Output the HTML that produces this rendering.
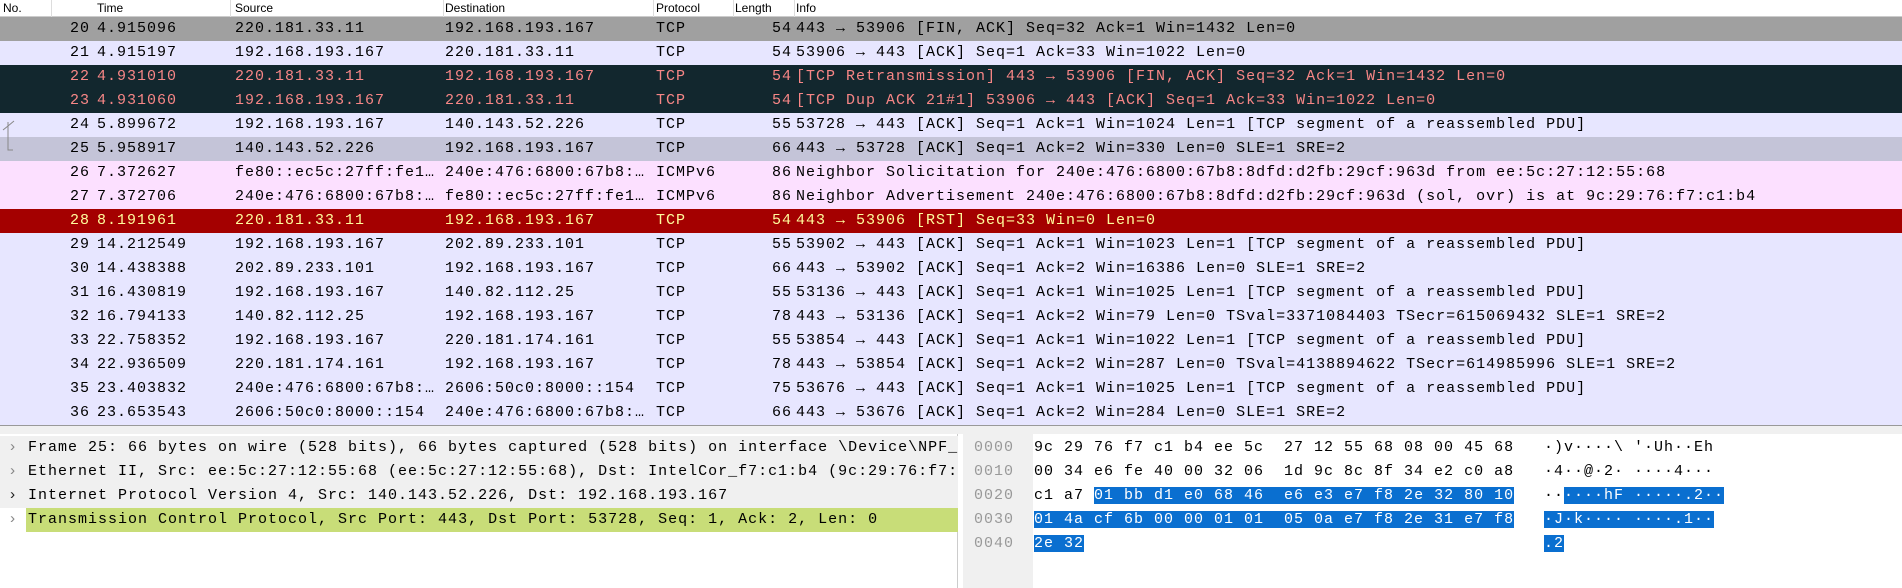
<!DOCTYPE html>
<html><head><meta charset="utf-8"><style>
*{margin:0;padding:0;box-sizing:border-box}
body{width:1902px;height:588px;overflow:hidden;background:#fff;font-family:"Liberation Mono",monospace;font-size:15px;letter-spacing:1px;color:#000;position:relative}
.hd{position:absolute;top:0;left:0;width:1902px;height:17px;background:#fff;border-bottom:1px solid #ccc;font-family:"Liberation Sans",sans-serif;font-size:12px;letter-spacing:0}
.hd span{position:absolute;top:1px}
.hd i{position:absolute;top:0;height:17px;border-left:1px solid #ddd}
.r{position:absolute;left:0;width:1902px;height:24px;line-height:24px;white-space:pre}
.r span{position:absolute;top:0}
.n{right:1812px;text-align:right}
.t{left:97px}.s{left:235px}.d{left:445px}.p{left:656px}
.l{right:1110px;text-align:right}.i{left:796px}
.lav{background:#e7e6ff}.gry{background:#a0a0a0}.drk{background:#12272e;color:#f78686}.sel{background:#c4c4d8}.pnk{background:#fce0ff}.red{background:#a40000;color:#fffc9c}
.sep{position:absolute;left:0;top:425px;width:1902px;height:9px;background:#f0f0f0;border-top:1px solid #999}
.lp{position:absolute;left:0;top:434px;width:958px;height:154px;background:#fff;border-right:1px solid #ccc}
.dl{position:absolute;left:0;width:958px;height:24px;line-height:24px;white-space:pre;background:#f0f0f0}
.dl b{position:absolute;left:8px;font-weight:normal;color:#888}
.dl span{position:absolute;left:28px}
.rp{position:absolute;left:963px;top:434px;width:939px;height:154px;background:#fff;border-left:1px solid #999}
.off{position:absolute;left:963px;top:434px;width:70px;height:154px;background:#f0f0f0}
.hx{position:absolute;height:24px;line-height:24px;white-space:pre}
.o{left:974px;color:#999}
.bl{background:#0a6fd0;color:#fff}
</style></head><body>
<div class="hd"><span style="left:3px">No.</span><i style="left:51px"></i><span style="left:97px">Time</span><i style="left:230px"></i><span style="left:235px">Source</span><i style="left:443px"></i><span style="left:445px">Destination</span><i style="left:653px"></i><span style="left:656px">Protocol</span><i style="left:733px"></i><span style="left:735px">Length</span><i style="left:794px"></i><span style="left:796px">Info</span></div>

<div class="r gry" style="top:17px"><span class="n">20</span><span class="t">4.915096</span><span class="s">220.181.33.11</span><span class="d">192.168.193.167</span><span class="p">TCP</span><span class="l">54</span><span class="i">443 → 53906 [FIN, ACK] Seq=32 Ack=1 Win=1432 Len=0</span></div>
<div class="r lav" style="top:41px"><span class="n">21</span><span class="t">4.915197</span><span class="s">192.168.193.167</span><span class="d">220.181.33.11</span><span class="p">TCP</span><span class="l">54</span><span class="i">53906 → 443 [ACK] Seq=1 Ack=33 Win=1022 Len=0</span></div>
<div class="r drk" style="top:65px"><span class="n">22</span><span class="t">4.931010</span><span class="s">220.181.33.11</span><span class="d">192.168.193.167</span><span class="p">TCP</span><span class="l">54</span><span class="i">[TCP Retransmission] 443 → 53906 [FIN, ACK] Seq=32 Ack=1 Win=1432 Len=0</span></div>
<div class="r drk" style="top:89px"><span class="n">23</span><span class="t">4.931060</span><span class="s">192.168.193.167</span><span class="d">220.181.33.11</span><span class="p">TCP</span><span class="l">54</span><span class="i">[TCP Dup ACK 21#1] 53906 → 443 [ACK] Seq=1 Ack=33 Win=1022 Len=0</span></div>
<div class="r lav" style="top:113px"><span class="n">24</span><span class="t">5.899672</span><span class="s">192.168.193.167</span><span class="d">140.143.52.226</span><span class="p">TCP</span><span class="l">55</span><span class="i">53728 → 443 [ACK] Seq=1 Ack=1 Win=1024 Len=1 [TCP segment of a reassembled PDU]</span></div>
<div class="r sel" style="top:137px"><span class="n">25</span><span class="t">5.958917</span><span class="s">140.143.52.226</span><span class="d">192.168.193.167</span><span class="p">TCP</span><span class="l">66</span><span class="i">443 → 53728 [ACK] Seq=1 Ack=2 Win=330 Len=0 SLE=1 SRE=2</span></div>
<svg style="position:absolute;left:0;top:118px" width="20" height="40"><path d="M8 4 V32 H13 M3 12 L8 8 L14 3" fill="none" stroke="#888" stroke-width="1"/></svg>
<div class="r pnk" style="top:161px"><span class="n">26</span><span class="t">7.372627</span><span class="s">fe80::ec5c:27ff:fe1…</span><span class="d">240e:476:6800:67b8:…</span><span class="p">ICMPv6</span><span class="l">86</span><span class="i">Neighbor Solicitation for 240e:476:6800:67b8:8dfd:d2fb:29cf:963d from ee:5c:27:12:55:68</span></div>
<div class="r pnk" style="top:185px"><span class="n">27</span><span class="t">7.372706</span><span class="s">240e:476:6800:67b8:…</span><span class="d">fe80::ec5c:27ff:fe1…</span><span class="p">ICMPv6</span><span class="l">86</span><span class="i">Neighbor Advertisement 240e:476:6800:67b8:8dfd:d2fb:29cf:963d (sol, ovr) is at 9c:29:76:f7:c1:b4</span></div>
<div class="r red" style="top:209px"><span class="n">28</span><span class="t">8.191961</span><span class="s">220.181.33.11</span><span class="d">192.168.193.167</span><span class="p">TCP</span><span class="l">54</span><span class="i">443 → 53906 [RST] Seq=33 Win=0 Len=0</span></div>
<div class="r lav" style="top:233px"><span class="n">29</span><span class="t">14.212549</span><span class="s">192.168.193.167</span><span class="d">202.89.233.101</span><span class="p">TCP</span><span class="l">55</span><span class="i">53902 → 443 [ACK] Seq=1 Ack=1 Win=1023 Len=1 [TCP segment of a reassembled PDU]</span></div>
<div class="r lav" style="top:257px"><span class="n">30</span><span class="t">14.438388</span><span class="s">202.89.233.101</span><span class="d">192.168.193.167</span><span class="p">TCP</span><span class="l">66</span><span class="i">443 → 53902 [ACK] Seq=1 Ack=2 Win=16386 Len=0 SLE=1 SRE=2</span></div>
<div class="r lav" style="top:281px"><span class="n">31</span><span class="t">16.430819</span><span class="s">192.168.193.167</span><span class="d">140.82.112.25</span><span class="p">TCP</span><span class="l">55</span><span class="i">53136 → 443 [ACK] Seq=1 Ack=1 Win=1025 Len=1 [TCP segment of a reassembled PDU]</span></div>
<div class="r lav" style="top:305px"><span class="n">32</span><span class="t">16.794133</span><span class="s">140.82.112.25</span><span class="d">192.168.193.167</span><span class="p">TCP</span><span class="l">78</span><span class="i">443 → 53136 [ACK] Seq=1 Ack=2 Win=79 Len=0 TSval=3371084403 TSecr=615069432 SLE=1 SRE=2</span></div>
<div class="r lav" style="top:329px"><span class="n">33</span><span class="t">22.758352</span><span class="s">192.168.193.167</span><span class="d">220.181.174.161</span><span class="p">TCP</span><span class="l">55</span><span class="i">53854 → 443 [ACK] Seq=1 Ack=1 Win=1022 Len=1 [TCP segment of a reassembled PDU]</span></div>
<div class="r lav" style="top:353px"><span class="n">34</span><span class="t">22.936509</span><span class="s">220.181.174.161</span><span class="d">192.168.193.167</span><span class="p">TCP</span><span class="l">78</span><span class="i">443 → 53854 [ACK] Seq=1 Ack=2 Win=287 Len=0 TSval=4138894622 TSecr=614985996 SLE=1 SRE=2</span></div>
<div class="r lav" style="top:377px"><span class="n">35</span><span class="t">23.403832</span><span class="s">240e:476:6800:67b8:…</span><span class="d">2606:50c0:8000::154</span><span class="p">TCP</span><span class="l">75</span><span class="i">53676 → 443 [ACK] Seq=1 Ack=1 Win=1025 Len=1 [TCP segment of a reassembled PDU]</span></div>
<div class="r lav" style="top:401px"><span class="n">36</span><span class="t">23.653543</span><span class="s">2606:50c0:8000::154</span><span class="d">240e:476:6800:67b8:…</span><span class="p">TCP</span><span class="l">66</span><span class="i">443 → 53676 [ACK] Seq=1 Ack=2 Win=284 Len=0 SLE=1 SRE=2</span></div>

<div class="sep"></div>
<div class="lp"></div>
<div class="dl" style="top:436px"><b>›</b><span>Frame 25: 66 bytes on wire (528 bits), 66 bytes captured (528 bits) on interface \Device\NPF_</span></div>
<div class="dl" style="top:460px"><b>›</b><span>Ethernet II, Src: ee:5c:27:12:55:68 (ee:5c:27:12:55:68), Dst: IntelCor_f7:c1:b4 (9c:29:76:f7:</span></div>
<div class="dl" style="top:484px"><b style="color:#222">›</b><span>Internet Protocol Version 4, Src: 140.143.52.226, Dst: 192.168.193.167</span></div>
<div class="dl" style="top:508px;background:#fff"><b>›</b><span style="left:26px;width:932px;background:#c8dd78;padding-left:2px">Transmission Control Protocol, Src Port: 443, Dst Port: 53728, Seq: 1, Ack: 2, Len: 0</span></div>

<div class="rp"></div>
<div class="off"></div>
<div class="hx o" style="top:436px">0000</div>
<div class="hx o" style="top:460px">0010</div>
<div class="hx o" style="top:484px">0020</div>
<div class="hx o" style="top:508px">0030</div>
<div class="hx o" style="top:532px">0040</div>
<div class="hx" style="left:1034px;top:436px">9c 29 76 f7 c1 b4 ee 5c  27 12 55 68 08 00 45 68</div>
<div class="hx" style="left:1034px;top:460px">00 34 e6 fe 40 00 32 06  1d 9c 8c 8f 34 e2 c0 a8</div>
<div class="hx" style="left:1034px;top:484px">c1 a7 <span class="bl">01 bb d1 e0 68 46  e6 e3 e7 f8 2e 32 80 10</span></div>
<div class="hx" style="left:1034px;top:508px"><span class="bl">01 4a cf 6b 00 00 01 01  05 0a e7 f8 2e 31 e7 f8</span></div>
<div class="hx" style="left:1034px;top:532px"><span class="bl">2e 32</span></div>
<div class="hx" style="left:1544px;top:436px">·)v····\ '·Uh··Eh</div>
<div class="hx" style="left:1544px;top:460px">·4··@·2· ····4···</div>
<div class="hx" style="left:1544px;top:484px">··<span class="bl">····hF ·····.2··</span></div>
<div class="hx" style="left:1544px;top:508px"><span class="bl">·J·k···· ····.1··</span></div>
<div class="hx" style="left:1544px;top:532px"><span class="bl">.2</span></div>
</body></html>
